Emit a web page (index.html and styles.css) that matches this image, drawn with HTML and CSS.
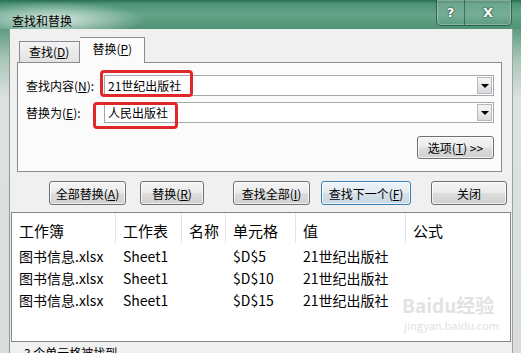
FILE: index.html
```html
<!DOCTYPE html>
<html lang="zh-CN">
<head>
  <meta charset="UTF-8">
  <meta name="viewport" content="width=device-width, initial-scale=1.0">
  <title>查找和替换</title>
  <link rel="stylesheet" href="styles.css">
</head>
<body>
  <div class="window">
    <div class="titlebar">
      <span class="title">查找和替换</span>
      <div class="caption-btns">
        <span class="cap-btn help">?</span>
        <span class="cap-btn close">X</span>
      </div>
    </div>
    <div class="frame">
      <div class="client">
        <div class="tab-area">
          <div class="tabs">
            <div class="tab">查找(<u>D</u>)</div>
            <div class="tab active">替换(<u>P</u>)</div>
          </div>
          <div class="panel">
            <div class="field-row">
              <label>查找内容(<u>N</u>):</label>
              <div class="combo">
                <span class="combo-text">21世纪出版社</span>
                <span class="drop"></span>
                <span class="mark mark-find"></span>
              </div>
            </div>
            <div class="field-row second">
              <label>替换为(<u>E</u>):</label>
              <div class="combo">
                <span class="combo-text">人民出版社</span>
                <span class="drop"></span>
                <span class="mark mark-replace"></span>
              </div>
            </div>
            <div class="options-row">
              <button class="btn options">选项(<u>T</u>) &gt;&gt;</button>
            </div>
          </div>
        </div>

        <div class="actions">
          <button class="btn w-replace-all">全部替换(<u>A</u>)</button>
          <button class="btn w-replace">替换(<u>R</u>)</button>
          <button class="btn w-find-all">查找全部(<u>I</u>)</button>
          <button class="btn focused w-find-next">查找下一个(<u>F</u>)</button>
          <button class="btn w-close">关闭</button>
        </div>

        <div class="results">
          <div class="row head">
            <span>工作簿</span>
            <span>工作表</span>
            <span>名称</span>
            <span>单元格</span>
            <span>值</span>
            <span>公式</span>
          </div>
          <div class="row">
            <span>图书信息.xlsx</span>
            <span>Sheet1</span>
            <span></span>
            <span>$D$5</span>
            <span>21世纪出版社</span>
            <span></span>
          </div>
          <div class="row">
            <span>图书信息.xlsx</span>
            <span>Sheet1</span>
            <span></span>
            <span>$D$10</span>
            <span>21世纪出版社</span>
            <span></span>
          </div>
          <div class="row">
            <span>图书信息.xlsx</span>
            <span>Sheet1</span>
            <span></span>
            <span>$D$15</span>
            <span>21世纪出版社</span>
            <span></span>
          </div>
          <div class="watermark">
            <span class="wm-logo">Baidu经验</span>
            <span class="wm-url">jingyan.baidu.com</span>
          </div>
        </div>

        <div class="status">3 个单元格被找到</div>
      </div>
    </div>
  </div>
</body>
</html>
```

FILE: styles.css
```css
* {
  box-sizing: border-box;
}
body {
  margin: 0;
  width: 521px;
  height: 353px;
  overflow: hidden;
  font-family: "Noto Sans CJK SC", "Liberation Sans", sans-serif;
  font-size: 12px;
  color: #000;
}
.window {
  display: flex;
  flex-direction: column;
  height: 353px;
  background: linear-gradient(180deg, #2c7154 0%, #4d9276 12%, #5d9f84 45%, #4b8f73 100%);
}
.titlebar {
  height: 35px;
  display: flex;
  justify-content: space-between;
  align-items: flex-start;
  background:
    radial-gradient(ellipse 90px 18px at 55px 20px, rgba(235, 245, 240, 0.85), rgba(235, 245, 240, 0) 100%),
    linear-gradient(180deg, #2a6f52 0%, #4f9478 14%, #64a489 50%, #4f9276 100%);
}
.title {
  margin: 13px 0 0 12px;
  line-height: 16px;
}
.caption-btns {
  display: flex;
  margin-right: 9px;
  border: 1px solid rgba(20, 50, 40, 0.55);
  border-top: none;
  border-radius: 0 0 5px 5px;
  overflow: hidden;
  box-shadow: inset 0 0 0 1px rgba(255, 255, 255, 0.25);
}
.cap-btn {
  height: 25px;
  display: flex;
  align-items: center;
  justify-content: center;
  color: #fff;
  font-family: "DejaVu Sans", sans-serif;
  font-weight: bold;
  font-size: 13px;
  text-shadow: 0 0 2px #1d3d30, 0 0 1px #1d3d30;
  background: linear-gradient(180deg, rgba(255, 255, 255, 0.2), rgba(255, 255, 255, 0.05));
}
.help {
  width: 28px;
  border-right: 1px solid rgba(20, 50, 40, 0.5);
}
.close {
  width: 46px;
}
.frame {
  flex: 1;
  display: flex;
  padding: 0 9px;
  background: linear-gradient(180deg, #5c9c82 0, #a9c6b8 30px, #dde2df 70px, #d9dcdb 100%);
}
.client {
  flex: 1;
  display: flex;
  flex-direction: column;
  background: #f0f0f0;
  border-left: 1px solid #8d9a94;
  box-shadow: 1px 0 0 #9aa59f;
}
.tab-area {
  margin: 8px 10px 0 7px;
}
.tabs {
  display: flex;
  align-items: flex-end;
  height: 25px;
  padding-left: 2px;
}
.tab {
  height: 21px;
  padding: 0 10px 0 9px;
  line-height: 19px;
  border: 1px solid #898c95;
  border-bottom: none;
  background: linear-gradient(180deg, #f3f3f3, #e2e2e2);
}
.tab.active {
  height: 26px;
  margin-bottom: -1px;
  padding: 0 12px;
  line-height: 22px;
  border-left: none;
  background: #fbfbfb;
  position: relative;
  z-index: 1;
}
.panel {
  border: 1px solid #898c95;
  background: #fbfbfb;
  padding: 12px 7px 12px 8px;
}
.field-row {
  display: flex;
  align-items: center;
  height: 21px;
}
.field-row.second {
  margin-top: 6px;
}
.field-row label {
  width: 78px;
}
.combo {
  position: relative;
  flex: 1;
  height: 21px;
  display: flex;
  border: 1px solid #a3a8ae;
  background: #fff;
}
.combo-text {
  flex: 1;
  padding-left: 3px;
  line-height: 19px;
}
.drop {
  width: 15px;
  margin: 1px;
  border: 1px solid #b4b8bd;
  background: linear-gradient(180deg, #f6f6f6, #dadada);
  display: flex;
  align-items: center;
  justify-content: center;
}
.drop::after {
  content: "";
  border-left: 4px solid transparent;
  border-right: 4px solid transparent;
  border-top: 4px solid #000;
}
.mark {
  position: absolute;
  border: 3px solid #e0282a;
  border-radius: 4px;
}
.mark-find {
  left: -5px;
  top: -6px;
  width: 93px;
  height: 27px;
}
.mark-replace {
  left: -12px;
  top: -1px;
  width: 85px;
  height: 27px;
}
.options-row {
  display: flex;
  justify-content: flex-end;
  margin-top: 13px;
}
.btn {
  height: 24px;
  padding: 0;
  font-family: inherit;
  font-size: 12px;
  color: #000;
  border: 1px solid #707070;
  border-radius: 3px;
  background: linear-gradient(180deg, #f4f4f4 0%, #ebebeb 48%, #dddddd 52%, #cfcfcf 100%);
  box-shadow: inset 0 0 0 1px rgba(255, 255, 255, 0.7);
}
.btn.options {
  width: 77px;
  height: 23px;
}
.btn.focused {
  border-color: #3c7fb1;
  background: linear-gradient(180deg, #eef4f8 0%, #e2ebf1 48%, #d5e1ea 52%, #c8d8e3 100%);
}
.actions {
  display: flex;
  margin-top: 9px;
  padding-left: 39px;
}
.w-replace-all {
  width: 77px;
}
.w-replace {
  width: 64px;
  margin-left: 14px;
}
.w-find-all {
  width: 77px;
  margin-left: 29px;
}
.w-find-next {
  width: 90px;
  margin-left: 11px;
}
.w-close {
  width: 76px;
  margin-left: 20px;
}
.results {
  position: relative;
  height: 130px;
  margin: 7px 1px 0 1px;
  border: 1px solid #828790;
  background: #fff;
  overflow: hidden;
}
.row {
  display: grid;
  grid-template-columns: 104px 66px 44px 70px 110px 1fr;
  height: 22px;
  line-height: 22px;
  font-size: 14px;
}
.row span {
  padding-left: 7px;
  white-space: nowrap;
}
.row.head {
  height: 32px;
  font-size: 15px;
}
.row.head span {
  border-right: 1px solid #e3e3e3;
  padding-top: 7px;
  height: 30px;
}
.row.head span:last-child {
  border-right: none;
}
.watermark {
  position: absolute;
  left: 390px;
  top: 78px;
  display: flex;
  flex-direction: column;
  color: #e2e2e2;
  white-space: nowrap;
}
.wm-logo {
  font-size: 19px;
  font-weight: bold;
  line-height: 28px;
}
.wm-url {
  font-size: 11px;
  line-height: 12px;
  padding-left: 2px;
}
.status {
  flex: 1;
  padding: 3px 0 0 14px;
  line-height: 16px;
}
```
